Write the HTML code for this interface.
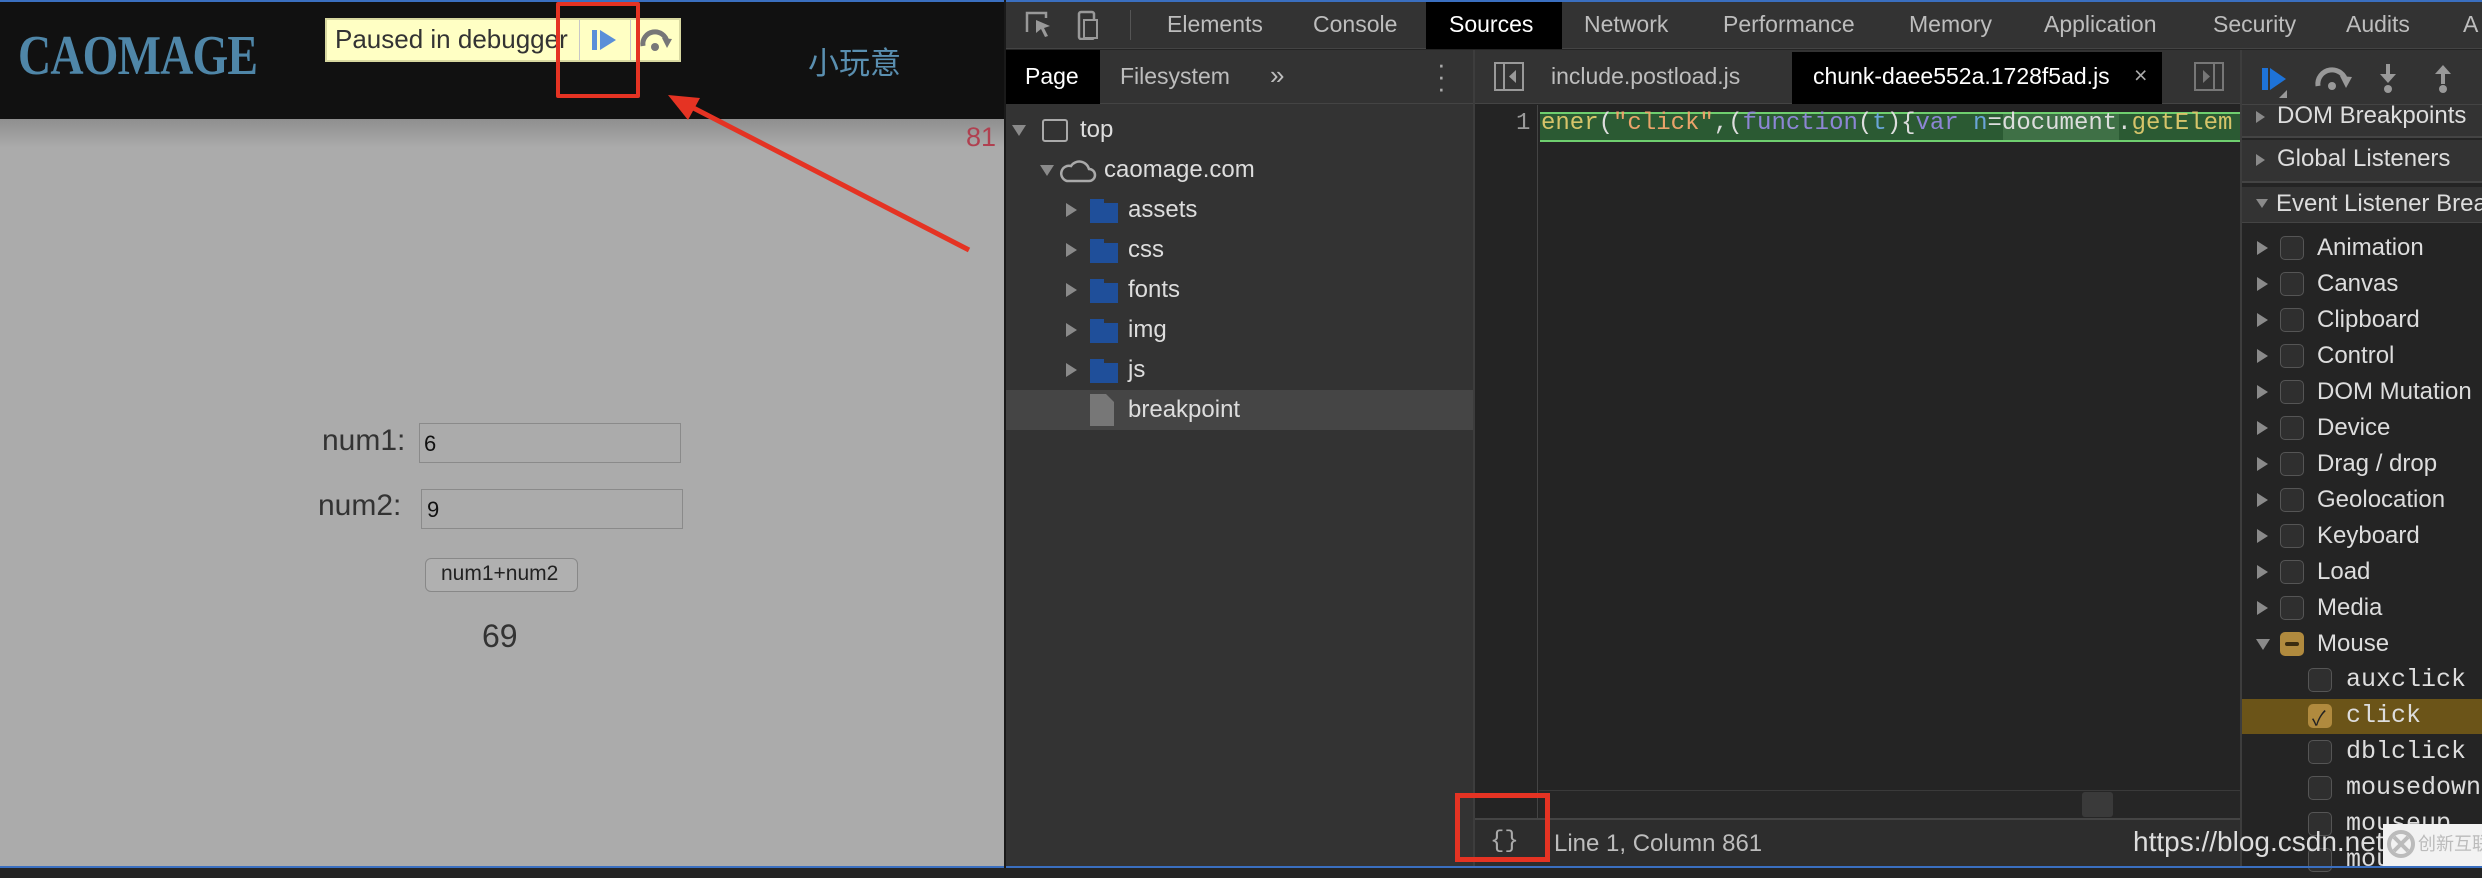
<!DOCTYPE html>
<html><head><meta charset="utf-8"><style>
*{margin:0;padding:0;box-sizing:border-box}
body{width:2482px;height:868px;overflow:hidden;position:relative;background:#242424;font-family:"Liberation Sans","Noto Sans CJK SC",sans-serif}
.a{position:absolute}
.t{position:absolute;white-space:nowrap}
.tab{position:absolute;top:0;height:49px;line-height:49px;font-size:23px;color:#bdbdbd}
.row{position:absolute;left:0;width:469px;height:40px;line-height:40px;font-size:24px;color:#ddd}
.ev{position:absolute;left:2242px;width:240px;height:36px;line-height:36px;font-size:24px;color:#ddd}
.tri{position:absolute;width:0;height:0;border-top:7px solid transparent;border-bottom:7px solid transparent;border-left:11px solid #8a8a8a}
.trid{position:absolute;width:0;height:0;border-left:7px solid transparent;border-right:7px solid transparent;border-top:11px solid #8a8a8a}
.cb{position:absolute;width:24px;height:24px;border:1.5px solid #555;border-radius:5px;background:#2f2f2f}
.mono{font-family:"Liberation Mono","DejaVu Sans Mono",monospace}
.fold{position:absolute;width:28px;height:24px;background:#1f4f9a}
.fold:before{content:"";position:absolute;left:14px;top:0;width:14px;height:4px;background:#333}
</style></head><body>
<!-- left page -->
<div class="a" style="left:0;top:0;width:1005px;height:868px;background:#ababab"></div>
<div class="a" style="left:0;top:118px;width:1005px;height:30px;background:linear-gradient(#8e8e8e,#ababab)"></div>
<div class="a" style="left:0;top:0;width:1005px;height:119px;background:#111"></div>
<div class="t" style="left:18px;top:24px;font-family:'Liberation Serif',serif;font-weight:bold;font-size:56px;color:#4f86a8;transform:scaleX(0.82);transform-origin:left;letter-spacing:-1px">CAOMAGE</div>
<div class="a" style="left:325px;top:18px;width:356px;height:44px;background:#ffffc4;border:2px solid #d8d8a0"></div>
<div class="t" style="left:335px;top:24px;font-size:26px;color:#333">Paused in debugger</div>
<div class="a" style="left:579px;top:20px;width:1px;height:40px;background:#c8c8c8"></div>
<div class="a" style="left:630px;top:20px;width:1px;height:40px;background:#c8c8c8"></div>
<div class="a" style="left:592px;top:30px;width:5px;height:20px;background:#5a8fd8"></div>
<div class="a" style="left:600px;top:30px;width:0;height:0;border-top:10px solid transparent;border-bottom:10px solid transparent;border-left:16px solid #5a8fd8"></div>
<svg class="a" style="left:638px;top:26px" width="36" height="28" viewBox="0 0 36 28"><path d="M5 20 A12 12 0 0 1 29 16" fill="none" stroke="#777" stroke-width="5"/><path d="M24 12 L34 13 L29 22 Z" fill="#777"/><circle cx="17" cy="21" r="4" fill="#777"/></svg>
<div class="a" style="left:556px;top:2px;width:84px;height:96px;border:4px solid #e53323;border-radius:2px"></div>
<div class="t" style="left:808px;top:38px;font-size:31px;color:#5a8fb0;font-family:'Noto Sans CJK SC',sans-serif">小玩意</div>
<div class="t" style="left:966px;top:122px;font-size:27px;color:#b04050">81</div>
<div class="t" style="left:322px;top:424px;font-size:30px;color:#333">num1:</div>
<div class="a" style="left:419px;top:423px;width:262px;height:40px;border:1.5px solid #8a8a8a;background:#ababab"></div>
<div class="t" style="left:424px;top:431px;font-size:22px;color:#111">6</div>
<div class="t" style="left:318px;top:489px;font-size:30px;color:#333">num2:</div>
<div class="a" style="left:421px;top:489px;width:262px;height:40px;border:1.5px solid #8a8a8a;background:#ababab"></div>
<div class="t" style="left:427px;top:497px;font-size:22px;color:#111">9</div>
<div class="a" style="left:425px;top:558px;width:153px;height:34px;border:1.5px solid #888;border-radius:6px;background:#b0b0b0"></div>
<div class="t" style="left:441px;top:562px;font-size:21px;color:#222">num1+num2</div>
<div class="t" style="left:482px;top:618px;font-size:32px;color:#333">69</div>
<svg class="a" style="left:0;top:0" width="2482" height="868">
<line x1="969" y1="250" x2="676" y2="99" stroke="#e53323" stroke-width="5"/>
<path d="M668 95 L700 98 L688 120 Z" fill="#e53323"/>
<line x1="1779" y1="545" x2="1568" y2="760" stroke="#e53323" stroke-width="5"/>
<path d="M1562 769 L1570 738 L1590 757 Z" fill="#e53323"/>
</svg>
<!-- devtools -->
<div class="a" style="left:1005px;top:0;width:1477px;height:49px;background:#333;border-bottom:1px solid #444"></div>
<div class="a" style="left:1426px;top:0;width:136px;height:49px;background:#000"></div>
<svg class="a" style="left:1024px;top:10px" width="90" height="30"><path d="M3 22 V3 H22 V8" fill="none" stroke="#999" stroke-width="2.5"/><path d="M12 10 L26 16 L20 18 L24 26 L21 27 L17 19 L12 23 Z" fill="#999"/><rect x="55" y="2" width="15" height="27" rx="2" fill="none" stroke="#999" stroke-width="2.5"/><rect x="60" y="10" width="13" height="18" fill="#333" stroke="#999" stroke-width="2"/></svg>
<div class="a" style="left:1130px;top:10px;width:1px;height:30px;background:#555"></div>
<div class="tab" style="left:1167px">Elements</div>
<div class="tab" style="left:1313px">Console</div>
<div class="tab" style="left:1449px;color:#fff">Sources</div>
<div class="tab" style="left:1584px">Network</div>
<div class="tab" style="left:1723px">Performance</div>
<div class="tab" style="left:1909px">Memory</div>
<div class="tab" style="left:2044px">Application</div>
<div class="tab" style="left:2213px">Security</div>
<div class="tab" style="left:2346px">Audits</div>
<div class="tab" style="left:2463px">A</div>
<!-- left panel -->
<div class="a" style="left:1005px;top:50px;width:469px;height:818px;background:#333"></div>
<div class="a" style="left:1005px;top:50px;width:469px;height:54px;background:#333;border-bottom:1px solid #444"></div>
<div class="a" style="left:1005px;top:50px;width:95px;height:54px;background:#000"></div>
<div class="t" style="left:1025px;top:63px;font-size:23px;color:#fff">Page</div>
<div class="t" style="left:1120px;top:63px;font-size:23px;color:#bdbdbd">Filesystem</div>
<div class="t" style="left:1270px;top:60px;font-size:26px;color:#bdbdbd">»</div>
<div class="t" style="left:1437px;top:58px;font-size:26px;color:#aaa;line-height:12px">·<br>·<br>·</div>
<div class="a" style="left:1473px;top:50px;width:2px;height:818px;background:#3d3d3d"></div>
<div class="trid" style="left:1012px;top:125px"></div>
<div class="a" style="left:1042px;top:119px;width:26px;height:23px;border:2.5px solid #aaa;border-radius:3px"></div>
<div class="row" style="left:1080px;top:110px">top</div>
<div class="trid" style="left:1040px;top:165px"></div>
<svg class="a" style="left:1059px;top:157px" width="38" height="26"><path d="M8 24 H30 A6 6 0 0 0 30 12 A10 10 0 0 0 12 9 A7 7 0 0 0 8 24 Z" fill="none" stroke="#aaa" stroke-width="2.5"/></svg>
<div class="row" style="left:1104px;top:150px">caomage.com</div>
<div class="tri" style="left:1066px;top:203px"></div><div class="fold" style="left:1090px;top:199px"></div><div class="row" style="left:1128px;top:190px">assets</div>
<div class="tri" style="left:1066px;top:243px"></div><div class="fold" style="left:1090px;top:239px"></div><div class="row" style="left:1128px;top:230px">css</div>
<div class="tri" style="left:1066px;top:283px"></div><div class="fold" style="left:1090px;top:279px"></div><div class="row" style="left:1128px;top:270px">fonts</div>
<div class="tri" style="left:1066px;top:323px"></div><div class="fold" style="left:1090px;top:319px"></div><div class="row" style="left:1128px;top:310px">img</div>
<div class="tri" style="left:1066px;top:363px"></div><div class="fold" style="left:1090px;top:359px"></div><div class="row" style="left:1128px;top:350px">js</div>
<div class="a" style="left:1005px;top:390px;width:468px;height:40px;background:#454545"></div>
<svg class="a" style="left:1089px;top:393px" width="26" height="34"><path d="M1 1 H17 L25 9 V33 H1 Z" fill="#777"/></svg>
<div class="row" style="left:1128px;top:390px">breakpoint</div>
<!-- editor -->
<div class="a" style="left:1475px;top:50px;width:766px;height:54px;background:#333;border-bottom:1px solid #444"></div>
<svg class="a" style="left:1494px;top:62px" width="32" height="30"><rect x="1" y="1" width="28" height="27" fill="none" stroke="#999" stroke-width="2"/><line x1="10" y1="1" x2="10" y2="28" stroke="#999" stroke-width="2"/><path d="M22 8 L15 14.5 L22 21 Z" fill="#999"/></svg>
<div class="t" style="left:1551px;top:63px;font-size:23px;color:#bdbdbd">include.postload.js</div>
<div class="a" style="left:1792px;top:52px;width:370px;height:52px;background:#000"></div>
<div class="t" style="left:1813px;top:63px;font-size:23px;color:#fff">chunk-daee552a.1728f5ad.js</div>
<div class="t" style="left:2134px;top:62px;font-size:23px;color:#aaa">×</div>
<svg class="a" style="left:2194px;top:62px" width="32" height="30"><rect x="1" y="1" width="28" height="27" fill="none" stroke="#777" stroke-width="2"/><line x1="20" y1="1" x2="20" y2="28" stroke="#777" stroke-width="2"/><path d="M9 8 L16 14.5 L9 21 Z" fill="#777"/></svg>
<div class="a" style="left:1475px;top:105px;width:63px;height:713px;background:#242424;border-right:1px solid #444"></div>
<div class="a" style="left:1539px;top:105px;width:701px;height:713px;background:#242424"></div>
<div class="t mono" style="left:1516px;top:110px;font-size:24px;color:#999">1</div>
<div class="a" style="left:1540px;top:112px;width:700px;height:30px;background:#2b5a33;border-top:2px solid #6fcf6f;border-bottom:2px solid #6fcf6f"></div>
<div class="a" style="left:2003px;top:114px;width:116px;height:26px;background:#3f7046"></div>
<div class="t mono" style="left:1541px;top:110px;font-size:24px;width:699px;overflow:hidden;color:#ddd"><span style="color:#d6c46a">ener</span>(<span style="color:#e9a36a">"click"</span>,(<span style="color:#8d86d4">function</span>(<span style="color:#6aa5d8">t</span>){<span style="color:#8d86d4">var</span> <span style="color:#6aa5d8">n</span>=document.<span style="color:#d6c46a">getElem</span></div>
<div class="a" style="left:1539px;top:790px;width:701px;height:28px;background:#262626;border-top:1px solid #3a3a3a"></div>
<div class="a" style="left:2082px;top:792px;width:31px;height:25px;background:#3a3a3a;border-radius:3px"></div>
<div class="a" style="left:1475px;top:818px;width:766px;height:50px;background:#2d2d2d;border-top:2px solid #444"></div>
<div class="t mono" style="left:1490px;top:828px;font-size:24px;color:#aaa">{}</div>
<div class="t" style="left:1554px;top:830px;font-size:24px;color:#bdbdbd">Line 1, Column 861</div>
<div class="a" style="left:1455px;top:793px;width:95px;height:69px;border:5px solid #e53323"></div>
<!-- right panel -->
<div class="a" style="left:2240px;top:50px;width:242px;height:818px;background:#242424;border-left:2px solid #3d3d3d"></div>
<div class="a" style="left:2242px;top:50px;width:240px;height:54px;background:#333"></div>
<div class="a" style="left:2262px;top:68px;width:6px;height:22px;background:#1e73d8"></div>
<div class="a" style="left:2270px;top:68px;width:0;height:0;border-top:11px solid transparent;border-bottom:11px solid transparent;border-left:16px solid #1e73d8"></div>
<div class="a" style="left:2279px;top:90px;width:0;height:0;border-left:8px solid transparent;border-bottom:8px solid #999"></div>
<svg class="a" style="left:2312px;top:64px" width="44" height="30"><path d="M6 22 A14 14 0 0 1 34 18" fill="none" stroke="#999" stroke-width="5"/><path d="M28 12 L40 13 L34 24 Z" fill="#999"/><circle cx="20" cy="22" r="4" fill="#999"/></svg>
<svg class="a" style="left:2378px;top:64px" width="20" height="30"><path d="M10 0 V14" stroke="#999" stroke-width="4"/><path d="M2 10 H18 L10 19 Z" fill="#999"/><circle cx="10" cy="25" r="4" fill="#999"/></svg>
<svg class="a" style="left:2433px;top:64px" width="20" height="30"><path d="M10 7 V20" stroke="#999" stroke-width="4"/><path d="M2 10 H18 L10 1 Z" fill="#999"/><circle cx="10" cy="25" r="4" fill="#999"/></svg>
<div class="a" style="left:2242px;top:104px;width:240px;height:34px;background:#333;border-top:1px solid #444;border-bottom:2px solid #444"></div>
<div class="tri" style="left:2256px;top:111px;border-left-width:9px;border-top-width:6px;border-bottom-width:6px"></div>
<div class="t" style="left:2277px;top:102px;font-size:24px;color:#ddd">DOM Breakpoints</div>
<div class="a" style="left:2242px;top:140px;width:240px;height:43px;background:#333;border-bottom:2px solid #444"></div>
<div class="tri" style="left:2256px;top:154px;border-left-width:9px;border-top-width:6px;border-bottom-width:6px"></div>
<div class="t" style="left:2277px;top:145px;font-size:24px;color:#ddd">Global Listeners</div>
<div class="a" style="left:2242px;top:187px;width:240px;height:36px;background:#333;border-bottom:1px solid #444"></div>
<div class="trid" style="left:2256px;top:199px;border-top-width:9px;border-left-width:6px;border-right-width:6px"></div>
<div class="t" style="left:2276px;top:190px;font-size:24px;color:#ddd">Event Listener Breakpoints</div>
<div class="a" style="left:2242px;top:699px;width:240px;height:35px;background:#6b5418"></div>
<div class="tri" style="left:2257px;top:241px"></div><div class="cb" style="left:2280px;top:236px"></div><div class="ev" style="left:2317px;top:230px">Animation</div>
<div class="tri" style="left:2257px;top:277px"></div><div class="cb" style="left:2280px;top:272px"></div><div class="ev" style="left:2317px;top:266px">Canvas</div>
<div class="tri" style="left:2257px;top:313px"></div><div class="cb" style="left:2280px;top:308px"></div><div class="ev" style="left:2317px;top:302px">Clipboard</div>
<div class="tri" style="left:2257px;top:349px"></div><div class="cb" style="left:2280px;top:344px"></div><div class="ev" style="left:2317px;top:338px">Control</div>
<div class="tri" style="left:2257px;top:385px"></div><div class="cb" style="left:2280px;top:380px"></div><div class="ev" style="left:2317px;top:374px">DOM Mutation</div>
<div class="tri" style="left:2257px;top:421px"></div><div class="cb" style="left:2280px;top:416px"></div><div class="ev" style="left:2317px;top:410px">Device</div>
<div class="tri" style="left:2257px;top:457px"></div><div class="cb" style="left:2280px;top:452px"></div><div class="ev" style="left:2317px;top:446px">Drag / drop</div>
<div class="tri" style="left:2257px;top:493px"></div><div class="cb" style="left:2280px;top:488px"></div><div class="ev" style="left:2317px;top:482px">Geolocation</div>
<div class="tri" style="left:2257px;top:529px"></div><div class="cb" style="left:2280px;top:524px"></div><div class="ev" style="left:2317px;top:518px">Keyboard</div>
<div class="tri" style="left:2257px;top:565px"></div><div class="cb" style="left:2280px;top:560px"></div><div class="ev" style="left:2317px;top:554px">Load</div>
<div class="tri" style="left:2257px;top:601px"></div><div class="cb" style="left:2280px;top:596px"></div><div class="ev" style="left:2317px;top:590px">Media</div>
<div class="trid" style="left:2256px;top:639px"></div><div class="cb" style="left:2280px;top:632px;background:#b08a3e;border-color:#b08a3e"></div><div class="a" style="left:2285px;top:642px;width:14px;height:4px;background:#3a2c10;border-radius:2px"></div><div class="ev" style="left:2317px;top:626px">Mouse</div>
<div class="cb" style="left:2308px;top:668px"></div><div class="ev mono" style="left:2346px;top:662px;font-size:25px">auxclick</div>
<div class="cb" style="left:2308px;top:704px;background:#b08a3e;border-color:#b08a3e"></div><div class="t" style="left:2312px;top:702px;font-size:20px;color:#222">✓</div><div class="ev mono" style="left:2346px;top:698px;font-size:25px">click</div>
<div class="cb" style="left:2308px;top:740px"></div><div class="ev mono" style="left:2346px;top:734px;font-size:25px">dblclick</div>
<div class="cb" style="left:2308px;top:776px"></div><div class="ev mono" style="left:2346px;top:770px;font-size:25px">mousedown</div>
<div class="cb" style="left:2308px;top:812px"></div><div class="ev mono" style="left:2346px;top:806px;font-size:25px">mouseup</div>
<div class="cb" style="left:2308px;top:848px"></div><div class="ev mono" style="left:2346px;top:842px;font-size:25px">mou</div>
<div class="t" style="left:2133px;top:826px;font-size:28px;color:#ddd">https://blog.csdn.net/c</div>
<div class="a" style="left:2383px;top:824px;width:99px;height:44px;background:#f2f2f2"></div>
<svg class="a" style="left:2386px;top:829px" width="30" height="30"><circle cx="15" cy="15" r="12" fill="none" stroke="#bbb" stroke-width="4"/><path d="M8 8 L22 22 M22 8 L8 22" stroke="#bbb" stroke-width="4"/></svg>
<div class="t" style="left:2418px;top:830px;font-size:18px;color:#bbb;font-family:'Noto Sans CJK SC',sans-serif">创新互联</div>
<div class="a" style="left:0;top:0;width:2482px;height:2px;background:#3a6fc0"></div>
<div class="a" style="left:0;top:866px;width:2482px;height:2px;background:#3a6fc0"></div>
<div class="a" style="left:1004px;top:0;width:2px;height:868px;background:#1a1a1a"></div>
</body></html>
